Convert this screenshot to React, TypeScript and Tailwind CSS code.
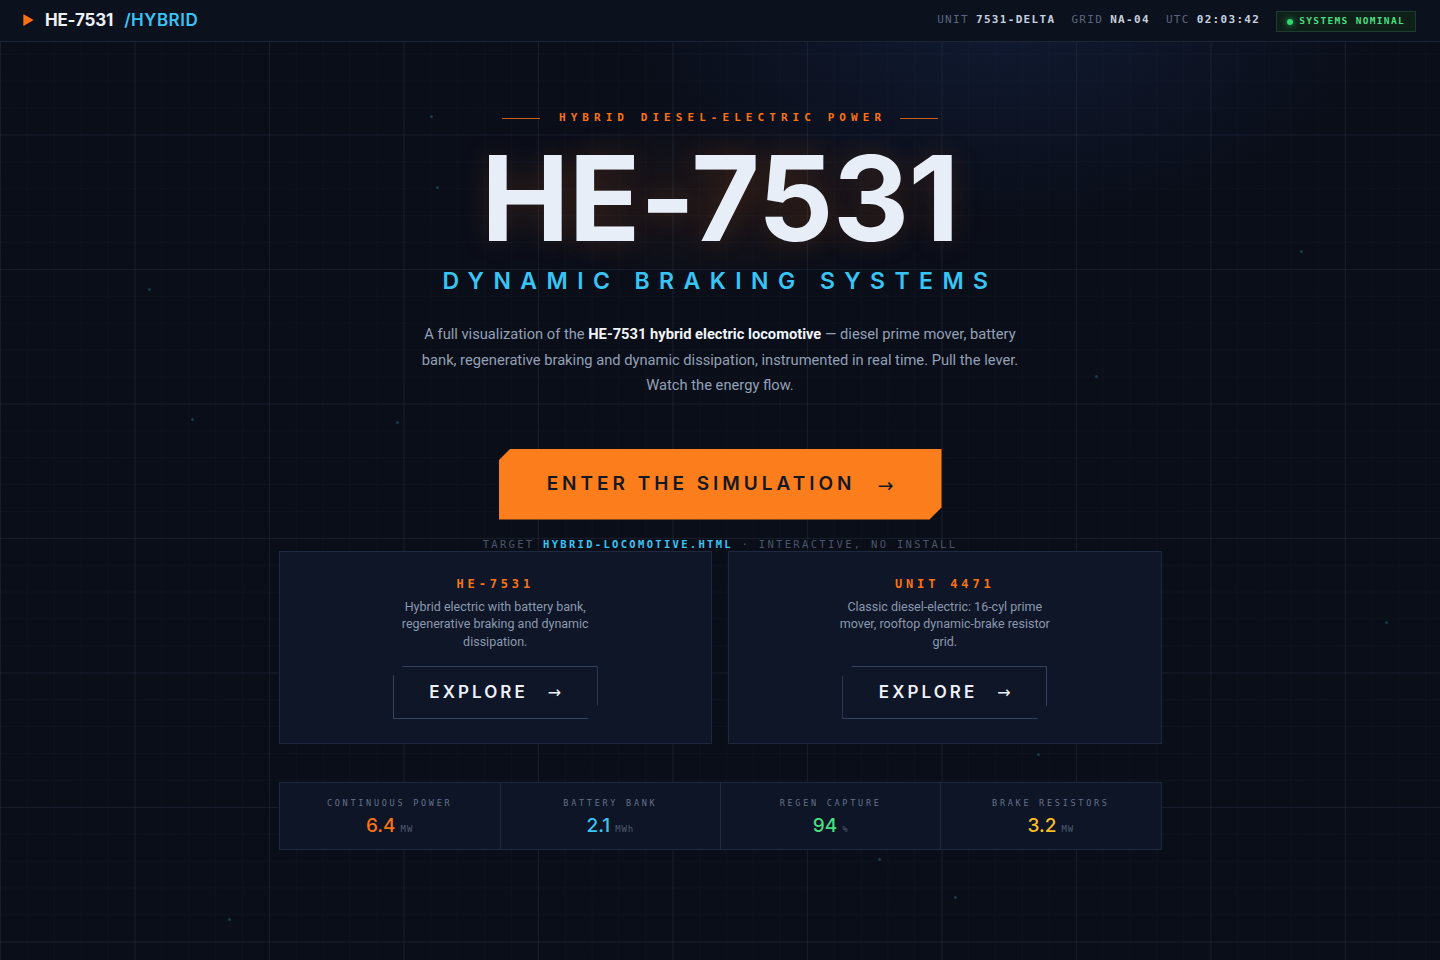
import { useMemo } from 'react';

const MONO = "font-['DejaVu_Sans_Mono','Liberation_Mono',monospace]";
const DISPLAY = "font-['Inter','Roboto',sans-serif]";
const BODY = "font-['Roboto','Noto_Sans',sans-serif]";
const ARROW = "font-['DejaVu_Sans','Noto_Sans',sans-serif] font-normal";

const DOTS: Array<[number, number]> = [
  [430, 115],
  [436, 186],
  [148, 288],
  [191, 418],
  [396, 421],
  [1095, 375],
  [1385, 621],
  [1037, 753],
  [878, 858],
  [954, 896],
  [228, 918],
  [1300, 250],
];

const stats = [
  { label: 'CONTINUOUS POWER', value: '6.4', unit: 'MW', color: 'text-[#f97316]' },
  { label: 'BATTERY BANK', value: '2.1', unit: 'MWh', color: 'text-[#38c5f5]' },
  { label: 'REGEN CAPTURE', value: '94', unit: '%', color: 'text-[#4ade80]' },
  { label: 'BRAKE RESISTORS', value: '3.2', unit: 'MW', color: 'text-[#fbbf24]' },
];

const cards = [
  {
    title: 'HE-7531',
    text: 'Hybrid electric with battery bank, regenerative braking and dynamic dissipation.',
  },
  {
    title: 'UNIT 4471',
    text: 'Classic diesel-electric: 16-cyl prime mover, rooftop dynamic-brake resistor grid.',
  },
];

const Header = (): JSX.Element => (
  <header className="relative z-10 flex h-[42px] items-center justify-between border-b border-[#1b2437] bg-[#0c111e] pl-[22px] pr-6">
    <div className={`flex items-center ${DISPLAY}`}>
      <span className="mr-[11px] text-[13px] leading-none text-[#f97316]">▶</span>
      <span className="text-[17px] font-bold tracking-[-0.01em] text-[#eef2f8]">HE-7531</span>
      <span className="ml-[11px] text-[17px] font-semibold tracking-[0.03em] text-[#38c5f5]">/HYBRID</span>
    </div>
    <div className={`flex items-center ${MONO} text-[11px] tracking-[0.12em]`}>
      <span className="text-[#5b667c]">UNIT</span>
      <span className="ml-[7px] font-bold text-[#c6d0df]">7531-DELTA</span>
      <span className="ml-4 text-[#5b667c]">GRID</span>
      <span className="ml-[7px] font-bold text-[#c6d0df]">NA-04</span>
      <span className="ml-4 text-[#5b667c]">UTC</span>
      <span className="ml-[7px] font-bold text-[#c6d0df]">02:03:42</span>
      <div className="ml-4 mt-[2px] flex h-[21px] items-center gap-[6px] border border-[#1d3b2f] bg-[#0f2019] px-[10px]">
        <span className="h-[6px] w-[6px] rounded-full bg-[#34d570] shadow-[0_0_6px_#22c55e]" />
        <span className="text-[9.5px] font-bold tracking-[0.14em] text-[#4ade80]">SYSTEMS NOMINAL</span>
      </div>
    </div>
  </header>
);

const ExploreCard = ({ title, text }: { title: string; text: string }): JSX.Element => (
  <div className="flex h-[193px] flex-col items-center border border-[#1e2940] bg-[#0e1628] pt-[24px]">
    <h3 className={`${MONO} text-[12px] font-bold leading-4 tracking-[0.32em] text-[#f97316]`}>{title}</h3>
    <p className={`${BODY} mt-[6px] max-w-[215px] text-center text-[12.5px] leading-[17.5px] text-[#8c98ad]`}>
      {text}
    </p>
    <button
      className={`${DISPLAY} mt-[16px] flex h-[53px] w-[205px] items-center justify-center gap-[20px] border border-[#34425c] bg-[#0e1628] text-[17px] font-semibold tracking-[0.18em] text-[#eef2f8] [clip-path:polygon(10px_0,100%_0,100%_calc(100%-14px),calc(100%-10px)_100%,0_100%,0_10px)]`}
    >
      <span>EXPLORE</span>
      <span className={`${ARROW} text-[16px] tracking-normal`}>→</span>
    </button>
  </div>
);

export default function App(): JSX.Element {
  const dots = useMemo(() => DOTS, []);

  return (
    <div className="relative min-h-[960px] overflow-hidden bg-[#0a0e19] bg-[linear-gradient(to_right,rgba(120,140,180,0.09)_1px,transparent_1px),linear-gradient(to_bottom,rgba(120,140,180,0.09)_1px,transparent_1px),linear-gradient(to_right,rgba(120,140,180,0.03)_1px,transparent_1px),linear-gradient(to_bottom,rgba(120,140,180,0.03)_1px,transparent_1px)] bg-[size:134.5px_134.5px,134.5px_134.5px,26.9px_26.9px,26.9px_26.9px]">
      {/* ambient glows */}
      <div className="pointer-events-none absolute left-[620px] top-[-200px] h-[420px] w-[760px] rounded-full bg-[radial-gradient(closest-side,rgba(40,70,140,0.22),transparent)]" />
      <div className="pointer-events-none absolute left-[470px] top-[120px] h-[160px] w-[500px] rounded-full bg-[radial-gradient(closest-side,rgba(249,115,22,0.08),transparent)]" />
      {dots.map(([x, y]) => (
        <span
          key={`${x}-${y}`}
          className="pointer-events-none absolute h-[3px] w-[3px] rounded-full bg-[#1e5060]/70"
          style={{ left: x, top: y }}
        />
      ))}

      <Header />

      <main className="relative z-10 flex flex-col items-center pt-[68px]">
        <div className="flex items-center gap-[14px]">
          <span className="h-px w-[38px] bg-[#f97316]/80" />
          <span className={`${MONO} pl-[0.46em] text-[11px] font-bold leading-4 tracking-[0.46em] text-[#f97316]`}>
            HYBRID DIESEL-ELECTRIC POWER
          </span>
          <span className="h-px w-[38px] bg-[#f97316]/80" />
        </div>

        <h1
          className={`${DISPLAY} mt-[13px] text-[118px] font-bold leading-none tracking-[-0.005em] text-[#e8eef8] [text-shadow:0_0_30px_rgba(249,115,22,0.15)]`}
        >
          HE-7531
        </h1>

        <h2 className={`${DISPLAY} mt-[10px] text-[23px] font-semibold leading-7 tracking-[0.41em] text-[#38c5f5]`}>
          DYNAMIC BRAKING SYSTEMS
        </h2>

        <p className={`${BODY} mt-[27px] max-w-[606px] text-center text-[14.7px] leading-[25.5px] text-[#94a0b5]`}>
          A full visualization of the <strong className="font-bold text-[#f1f5f9]">HE-7531 hybrid electric locomotive</strong> — diesel prime mover, battery bank, regenerative braking and dynamic dissipation, instrumented in real time. Pull the lever. Watch the energy flow.
        </p>

        <button
          className={`${DISPLAY} mt-[50px] flex h-[71px] w-[443px] items-center justify-center gap-[22px] bg-[#fb7d1c] text-[19px] font-semibold tracking-[0.21em] text-[#141820] [clip-path:polygon(12px_0,100%_0,100%_calc(100%-12px),calc(100%-12px)_100%,0_100%,0_12px)]`}
        >
          <span>ENTER THE SIMULATION</span>
          <span className={`${ARROW} mt-[3px] text-[19px] tracking-normal`}>→</span>
        </button>

        <div className={`${MONO} mt-[16px] text-[10.5px] leading-4 tracking-[0.22em] text-[#4a5569]`}>
          TARGET <span className="font-bold text-[#38c5f5]">HYBRID-LOCOMOTIVE.HTML</span> · INTERACTIVE, NO INSTALL
        </div>

        <div className="mt-[-1px] grid w-[883px] grid-cols-2 gap-4">
          {cards.map((card) => (
            <ExploreCard key={card.title} title={card.title} text={card.text} />
          ))}
        </div>

        <div className="mt-[38px] grid h-[68px] w-[883px] grid-cols-4 border border-[#1e2940] bg-[#0d1526]">
          {stats.map((stat, i) => (
            <div
              key={stat.label}
              className={`flex flex-col items-center pt-[14px] ${i > 0 ? 'border-l border-[#1e2940]' : ''}`}
            >
              <span className={`${MONO} text-[8.5px] leading-3 tracking-[0.32em] text-[#66718a]`}>{stat.label}</span>
              <div className="mt-[5px] flex items-baseline gap-[5px]">
                <span className={`${DISPLAY} text-[19px] font-medium leading-6 ${stat.color}`}>{stat.value}</span>
                <span className={`${MONO} text-[9px] tracking-[0.1em] text-[#4f5a70]`}>{stat.unit}</span>
              </div>
            </div>
          ))}
        </div>
      </main>
    </div>
  );
}
